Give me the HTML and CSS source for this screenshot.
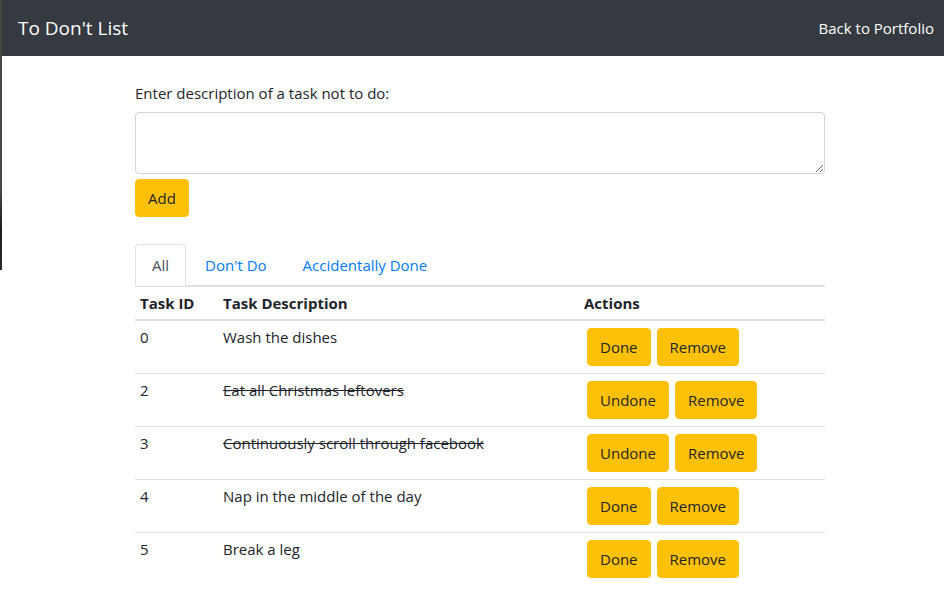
FILE: index.html
```html
<!DOCTYPE html>
<html lang="en">
<head>
<meta charset="utf-8">
<title>To Don't List</title>
<link rel="stylesheet" href="styles.css">
</head>
<body>
<div class="edge-strip"></div>
<nav class="navbar">
  <span class="brand">To Don't List</span>
  <a class="nav-link-right" href="#">Back to Portfolio</a>
</nav>
<main class="page">
  <div class="container">
    <label class="label" for="task">Enter description of a task not to do:</label>
    <textarea id="task" class="textarea" rows="2"></textarea>
    <div class="add-row"><button class="btn">Add</button></div>
    <ul class="tabs">
      <li class="tab active">All</li>
      <li class="tab">Don't Do</li>
      <li class="tab">Accidentally Done</li>
    </ul>
    <table class="table">
      <thead>
        <tr><th class="c-id">Task ID</th><th class="c-desc">Task Description</th><th class="c-act">Actions</th></tr>
      </thead>
      <tbody>
        <tr><td>0</td><td>Wash the dishes</td><td><div class="actions"><button class="btn">Done</button><button class="btn">Remove</button></div></td></tr>
        <tr><td>2</td><td class="struck">Eat all Christmas leftovers</td><td><div class="actions"><button class="btn">Undone</button><button class="btn">Remove</button></div></td></tr>
        <tr><td>3</td><td class="struck">Continuously scroll through facebook</td><td><div class="actions"><button class="btn">Undone</button><button class="btn">Remove</button></div></td></tr>
        <tr><td>4</td><td>Nap in the middle of the day</td><td><div class="actions"><button class="btn">Done</button><button class="btn">Remove</button></div></td></tr>
        <tr><td>5</td><td>Break a leg</td><td><div class="actions"><button class="btn">Done</button><button class="btn">Remove</button></div></td></tr>
      </tbody>
    </table>
  </div>
</main>
</body>
</html>
```

FILE: styles.css
```css
* { box-sizing: border-box; }
html, body { margin: 0; padding: 0; }
body {
  font-family: "Open Sans", "Noto Sans", sans-serif;
  font-size: 15px;
  line-height: 24px;
  color: #212529;
  background: #fff;
}
.edge-strip {
  position: absolute;
  left: 0; top: 0;
  width: 2px; height: 270px;
  background: linear-gradient(#4a4643 0%, #4a4643 70%, #1e1e1e 85%, #2a2a2a 100%);
  z-index: 5;
}
.navbar {
  height: 56px;
  background: #343a40;
  display: flex;
  align-items: center;
  justify-content: space-between;
  padding: 0 10px 0 18px;
}
.brand {
  color: #fff;
  font-size: 19px;
  line-height: 28px;
  padding-bottom: 1px;
}
.nav-link-right {
  color: #fff;
  text-decoration: none;
  font-size: 15px;
}
.page { padding-left: 16px; }
.container {
  width: 690px;
  margin: 0 auto;
  padding-top: 25px;
}
.label {
  display: block;
  margin-bottom: 7px;
}
.textarea {
  display: block;
  width: 100%;
  height: 62px;
  border: 1px solid #ced4da;
  border-radius: 4px;
  padding: 6px 12px;
  font: inherit;
  resize: vertical;
  margin: 0;
}
.add-row { margin-top: 5px; }
.btn {
  font: inherit;
  font-size: 15px;
  line-height: 24px;
  color: #212529;
  background: #ffc107;
  border: 1px solid #ffc107;
  border-radius: 4px;
  padding: 6px 12px;
  margin: 0;
  cursor: pointer;
}
.tabs {
  list-style: none;
  margin: 27px 0 0 0;
  padding: 0;
  display: flex;
  border-bottom: 1px solid #dee2e6;
}
.tab {
  padding: 8px 16px;
  margin-bottom: -1px;
  border: 1px solid transparent;
  border-top-left-radius: 4px;
  border-top-right-radius: 4px;
  color: #007bff;
  line-height: 24px;
}
.tab + .tab { margin-left: 2px; }
.tab.active {
  color: #495057;
  background: #fff;
  border-color: #dee2e6 #dee2e6 #fff;
}
.table {
  width: 100%;
  border-collapse: collapse;
  table-layout: fixed;
}
.table th, .table td {
  text-align: left;
  vertical-align: top;
  padding: 4px 5px;
  border-top: 1px solid #dee2e6;
}
.table th {
  font-weight: 700;
  border-bottom: 2px solid #dee2e6;
}
.c-id { width: 83px; }
.c-desc { width: 361px; }
.struck { text-decoration: line-through; }
.actions {
  display: flex;
  gap: 6px;
  margin: 3px 0 3px 3px;
}
```
